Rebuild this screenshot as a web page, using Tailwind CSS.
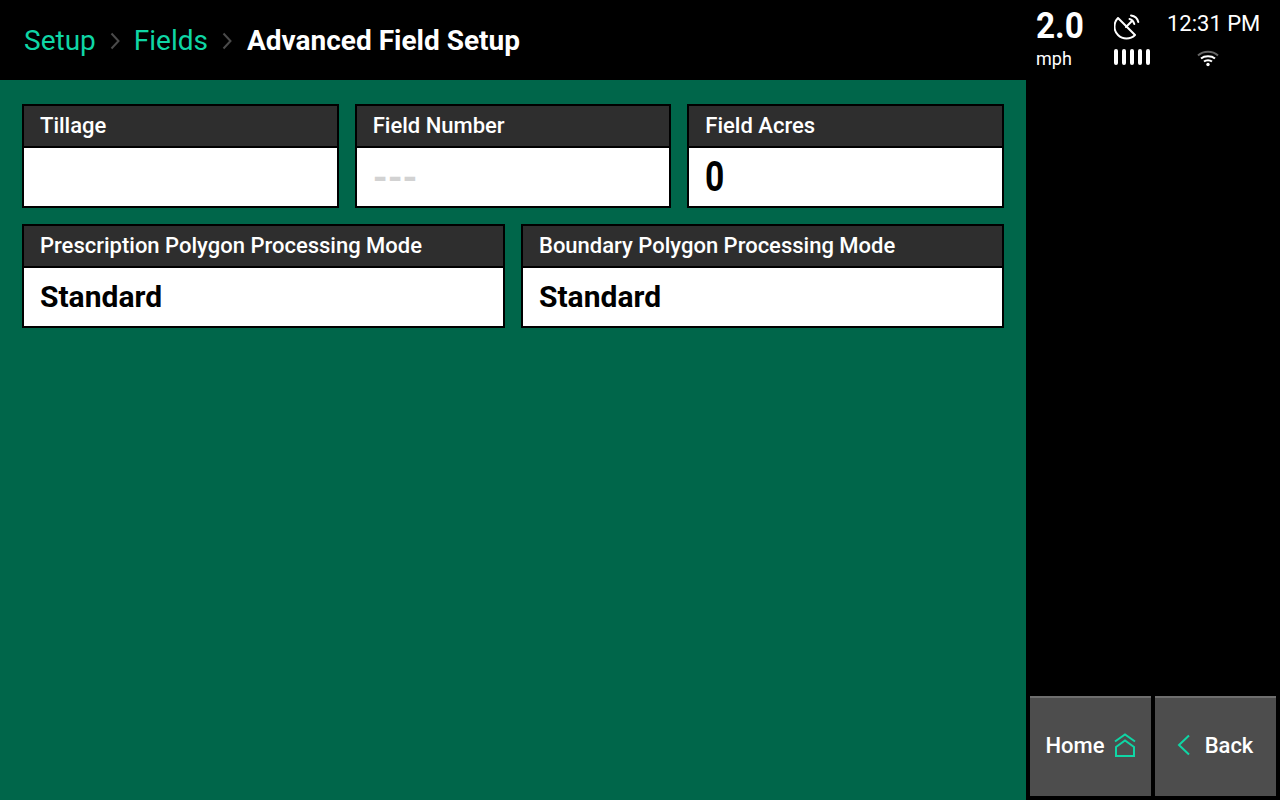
<!DOCTYPE html>
<html>
<head>
<meta charset="utf-8">
<script src="https://cdn.jsdelivr.net/npm/@tailwindcss/browser@4"></script>
</head>
<body class="m-0 bg-black">
<div class="w-[1280px] h-[800px] overflow-hidden flex flex-col bg-black font-['Roboto',sans-serif]">
  <header class="h-20 shrink-0 flex items-center justify-between bg-black">
    <nav class="flex items-center pl-6 pt-[1px] text-[28px] leading-none">
      <span class="text-[#0fd6a5]">Setup</span>
      <svg class="mx-[13px] w-[12px] h-[20px]" viewBox="0 0 12 20" fill="none" stroke="#4a4a4a" stroke-width="2"><path d="M2.500 2.500 9.500 10 2.500 17.500"/></svg>
      <span class="text-[#0fd6a5]">Fields</span>
      <svg class="ml-[13px] mr-[14px] w-[12px] h-[20px]" viewBox="0 0 12 20" fill="none" stroke="#4a4a4a" stroke-width="2"><path d="M2.500 2.500 9.500 10 2.500 17.500"/></svg>
      <span class="text-white font-bold">Advanced Field Setup</span>
    </nav>
    <div class="flex items-start text-white h-20 pr-[21px]">
      <div class="w-[78px] pt-[8px] flex flex-col">
        <span class="text-[37px] leading-[36px] font-bold origin-left scale-x-[0.9] whitespace-nowrap">2.0</span>
        <span class="text-[18px] leading-[22px] mt-[4px]">mph</span>
      </div>
      <div class="w-[53px] pt-[14px] flex flex-col">
        <svg class="w-[26px] h-[26px]" viewBox="0 0 26 26" fill="none" stroke="#fff" stroke-width="2" stroke-linecap="round" stroke-linejoin="round">
          <path d="M4 4A12 12 0 0 0 21 21Z"/>
          <path d="M12 13 18 7"/>
          <path d="M17 1.500C20.500 2 23.500 4.500 24.300 8"/>
          <path d="M15.500 5C17.800 5.500 19.500 7.500 20.300 10"/>
        </svg>
        <div class="flex gap-[4px] mt-[9px]">
          <i class="block w-[4px] h-[16px] rounded-[2px] bg-white"></i>
          <i class="block w-[4px] h-[16px] rounded-[2px] bg-white"></i>
          <i class="block w-[4px] h-[16px] rounded-[2px] bg-white"></i>
          <i class="block w-[4px] h-[16px] rounded-[2px] bg-white"></i>
          <i class="block w-[4px] h-[16px] rounded-[2px] bg-white"></i>
        </div>
      </div>
      <div class="w-[92px] pt-[11px] flex flex-col items-start">
        <span class="text-[22px] leading-[26px] whitespace-nowrap">12:31 PM</span>
        <svg class="w-[22px] h-[18px] mt-[12px] ml-[30px]" viewBox="0 0 22 18" fill="none" stroke-width="2">
          <path d="M1 6.500C6.500 1.500 15.500 1.500 21 6.500" stroke="#666"/>
          <path d="M4 9.500C7.500 6.500 14.500 6.500 18 9.500" stroke="#fff"/>
          <path d="M7 12.500C9 10.800 13 10.800 15 12.500" stroke="#fff"/>
          <circle cx="11" cy="15.500" r="1.700" fill="#fff"/>
        </svg>
      </div>
    </div>
  </header>
  <div class="flex flex-1 min-h-0">
    <main class="w-[1026px] bg-[#00664a] pl-[22px] pr-[22px] pt-6 flex flex-col gap-4">
      <div class="grid grid-cols-3 gap-4">
        <div class="h-[104px] border-2 border-black flex flex-col">
          <div class="h-10 bg-[#2e2e2e] text-white text-[22px] font-medium leading-[40px] pl-4">Tillage</div>
          <div class="h-[60px] bg-white border-t-2 border-black"></div>
        </div>
        <div class="h-[104px] border-2 border-black flex flex-col">
          <div class="h-10 bg-[#2e2e2e] text-white text-[22px] font-medium leading-[40px] pl-4">Field Number</div>
          <div class="h-[60px] bg-white border-t-2 border-black pl-4 text-[#d2d2d2] text-[38px] leading-[60px] font-bold">---</div>
        </div>
        <div class="h-[104px] border-2 border-black flex flex-col">
          <div class="h-10 bg-[#2e2e2e] text-white text-[22px] font-medium leading-[40px] pl-4">Field Acres</div>
          <div class="h-[60px] bg-white border-t-2 border-black pl-4 text-black text-[42px] leading-[58px] font-bold"><span class="inline-block origin-left scale-x-[0.8]">0</span></div>
        </div>
      </div>
      <div class="grid grid-cols-2 gap-4">
        <div class="h-[104px] border-2 border-black flex flex-col">
          <div class="h-10 bg-[#2e2e2e] text-white text-[22px] font-medium leading-[40px] pl-4">Prescription Polygon Processing Mode</div>
          <div class="h-[60px] bg-white border-t-2 border-black pl-4 text-black text-[30px] leading-[58px] font-bold">Standard</div>
        </div>
        <div class="h-[104px] border-2 border-black flex flex-col">
          <div class="h-10 bg-[#2e2e2e] text-white text-[22px] font-medium leading-[40px] pl-4">Boundary Polygon Processing Mode</div>
          <div class="h-[60px] bg-white border-t-2 border-black pl-4 text-black text-[30px] leading-[58px] font-bold">Standard</div>
        </div>
      </div>
    </main>
    <aside class="flex-1 flex flex-col justify-end px-1 pb-1 bg-black">
      <div class="flex gap-1">
        <div class="w-[121px] h-[100px] bg-[#4d4d4d] border-t-2 border-[#6e6e6e] pb-1 flex items-center justify-center gap-[9px] text-white text-[22px] font-medium">
          <span>Home</span>
          <svg class="w-[22px] h-[24px]" viewBox="0 0 22 24" fill="none" stroke="#0fd6a5" stroke-width="2"><path d="M1 8.500 11 1.500 21 8.500"/><path d="M2 23V14L11 7.500 20 14V23Z"/></svg>
        </div>
        <div class="w-[121px] h-[100px] bg-[#4d4d4d] border-t-2 border-[#6e6e6e] pb-1 pr-[1px] flex items-center justify-center gap-[14px] text-white text-[22px] font-medium">
          <svg class="w-[14px] h-[22px]" viewBox="0 0 14 22" fill="none" stroke="#0fd6a5" stroke-width="2"><path d="M12 1.500 2 11 12 20.500"/></svg>
          <span>Back</span>
        </div>
      </div>
    </aside>
  </div>
</div>
</body>
</html>
